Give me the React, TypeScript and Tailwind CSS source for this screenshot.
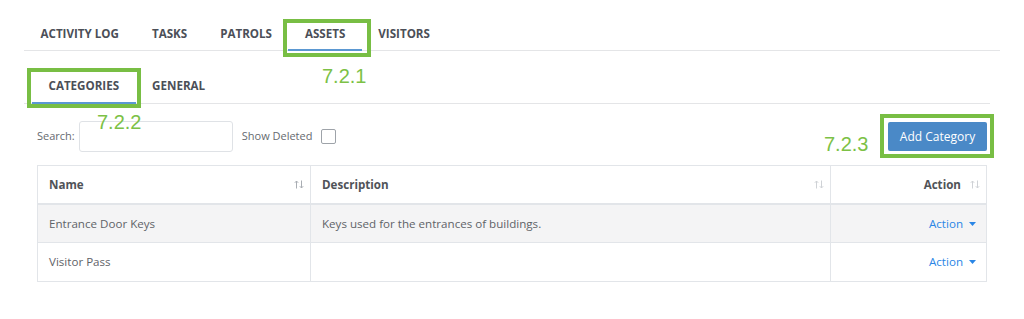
import React from "react";

const topTabs = ["Activity Log", "Tasks", "Patrols", "Assets", "Visitors"];
const subTabs = ["Categories", "General"];

const rows = [
  { name: "Entrance Door Keys", description: "Keys used for the entrances of buildings." },
  { name: "Visitor Pass", description: "" },
];

const SortIcon = ({ dark }: { dark?: boolean }) => (
  <svg width="10" height="9" viewBox="0 0 10 9" className="shrink-0">
    <g stroke={dark ? "#a9adb3" : "#cfd2d6"} strokeWidth="1" fill="none">
      <path d="M2.5 8.5V1M0.8 2.8L2.5 1l1.7 1.8" />
      <path d="M7.5 0.5V8M5.8 6.2L7.5 8l1.7-1.8" />
    </g>
  </svg>
);

const Caret = () => (
  <svg width="7" height="4" viewBox="0 0 7 4" className="ml-[6px]">
    <path d="M0 0h7L3.5 4z" fill="#2a86e6" />
  </svg>
);

const Annotation = ({ className }: { className: string }) => (
  <div className={`absolute border-[4px] border-[#78be44] pointer-events-none ${className}`} />
);

const Label = ({ text, className }: { text: string; className: string }) => (
  <div
    className={`absolute font-['Liberation_Sans',sans-serif] text-[20px] leading-none text-[#7cc146] ${className}`}
  >
    {text}
  </div>
);

export default function App() {
  return (
    <div className="relative w-[1024px] h-[319px] bg-white font-['Open_Sans',sans-serif] overflow-hidden">
      {/* main tabs */}
      <div className="ml-[24px] w-[976px] flex border-b border-[#e4e5e7]">
        {topTabs.map((t) => (
          <div
            key={t}
            className={`px-[16.5px] pt-[26px] pb-[7px] leading-[16px] text-[11.6px] font-bold uppercase text-[#4b4f58] -mb-px border-b-2 ${
              t === "Assets" ? "border-[#5b98d2]" : "border-transparent"
            }`}
          >
            {t}
          </div>
        ))}
      </div>

      {/* sub tabs */}
      <div className="ml-[24px] w-[966px] flex border-b border-[#e4e5e7] pl-[8px]">
        {subTabs.map((t) => (
          <div
            key={t}
            className={`px-[16.5px] pt-[27px] pb-[8px] leading-[16px] text-[11.6px] font-bold uppercase text-[#4b4f58] -mb-px border-b-2 ${
              t === "Categories" ? "border-[#5b98d2]" : "border-transparent"
            }`}
          >
            {t}
          </div>
        ))}
      </div>

      <div className="ml-[37px] w-[950px]">
        {/* toolbar */}
        <div className="mt-[17px] flex items-center">
          <span className="text-[11px] text-[#666a70]">Search:</span>
          <input className="ml-[4px] w-[154px] h-[31px] rounded-[3px] border border-[#dfe2e6] outline-none" />
          <span className="ml-[9px] text-[11px] text-[#666a70]">Show Deleted</span>
          <span className="ml-[9px] w-[15px] h-[15px] rounded-[2px] border border-[#9ea3a9] bg-white" />
          <button className="ml-auto w-[99px] h-[29px] rounded-[2px] bg-[#4a89c7] text-white text-[12px] leading-none">
            Add Category
          </button>
        </div>

        {/* table */}
        <div className="mt-[13px] border border-[#e2e5e9]">
          <div className="grid grid-cols-[273px_520px_1fr] h-[39px] border-b-2 border-[#e2e5e9] text-[11.6px] font-bold text-[#505358]">
            <div className="flex items-center justify-between pl-[11px] pr-[6px] border-r border-[#e2e5e9]">
              <span>Name</span>
              <SortIcon dark />
            </div>
            <div className="flex items-center justify-between pl-[11px] pr-[6px] border-r border-[#e2e5e9]">
              <span>Description</span>
              <SortIcon />
            </div>
            <div className="flex items-center justify-end gap-[9px] pr-[6px]">
              <span>Action</span>
              <SortIcon />
            </div>
          </div>
          {rows.map((r, i) => (
            <div
              key={r.name}
              className={`grid grid-cols-[273px_520px_1fr] h-[38px] text-[11.6px] text-[#5f6368] ${
                i === 0 ? "bg-[#f4f4f5] border-b border-[#e2e5e9]" : "bg-white"
              }`}
            >
              <div className="flex items-center pl-[11px] border-r border-[#e2e5e9]">{r.name}</div>
              <div className="flex items-center pl-[11px] border-r border-[#e2e5e9]">{r.description}</div>
              <div className="flex items-center justify-end pr-[10px] text-[#2a86e6]">
                Action
                <Caret />
              </div>
            </div>
          ))}
        </div>
      </div>

      {/* annotations */}
      <Annotation className="left-[283px] top-[19px] w-[88px] h-[38px]" />
      <Label text="7.2.1" className="left-[322px] top-[66px]" />
      <Annotation className="left-[27px] top-[68px] w-[114px] h-[40px]" />
      <Label text="7.2.2" className="left-[97px] top-[112px]" />
      <Annotation className="left-[880px] top-[114px] w-[114px] h-[44px]" />
      <Label text="7.2.3" className="left-[824px] top-[134px]" />
    </div>
  );
}
